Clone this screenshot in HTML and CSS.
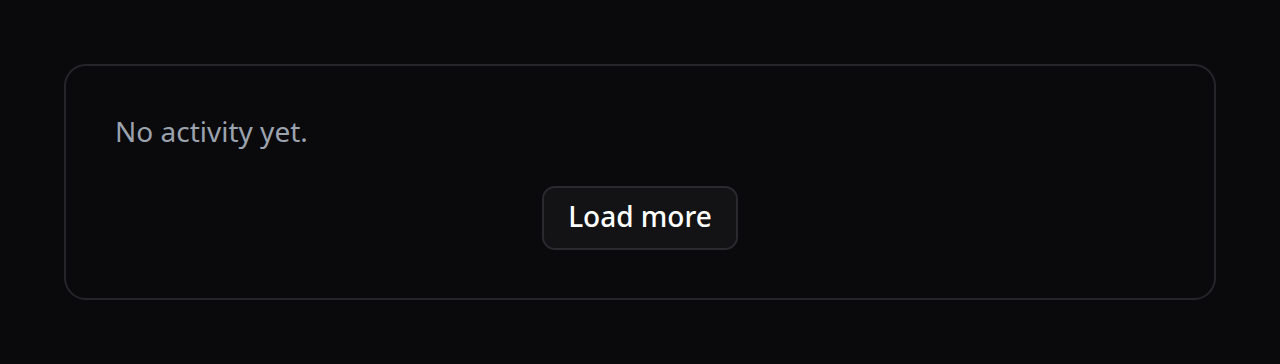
FILE: index.html
```html
<!DOCTYPE html>
<html lang="en">
<head>
    <meta charset="UTF-8">
    <meta name="viewport" content="width=device-width, initial-scale=1.0">
    <title>Activity</title>
    <link rel="stylesheet" href="styles.css">
</head>
<body>
    <div class="activity-card">
        <p class="empty">No activity yet.</p>
        <div class="actions">
            <button class="load-more">Load more</button>
        </div>
    </div>
</body>
</html>
```

FILE: styles.css
```css
body {
    margin: 0;
    padding: 64px;
    background-color: #0a0a0c;
    font-family: "Noto Sans", "Open Sans", sans-serif;
}
.activity-card {
    border: 2px solid #26262a;
    border-radius: 22px;
    padding: 43px 49px 48px;
}
.empty {
    margin: 0;
    font-size: 28px;
    line-height: 44px;
    color: #9ba3af;
}
.actions {
    display: flex;
    justify-content: center;
    margin-top: 33px;
}
.load-more {
    font-family: inherit;
    font-size: 28px;
    font-weight: 500;
    color: #ffffff;
    background-color: #131315;
    border: 2px solid #2a2a2e;
    border-radius: 13px;
    padding: 0 24px 4px;
    height: 64px;
    cursor: pointer;
}
```
